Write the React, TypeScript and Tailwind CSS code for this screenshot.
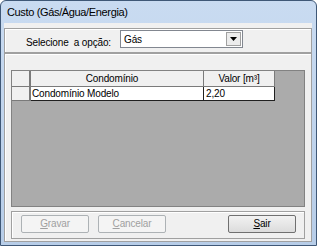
const FONT = "font-['Liberation_Sans','Noto_Sans',sans-serif]";

function ArrowDown() {
  return (
    <svg width="7" height="4" viewBox="0 0 7 4" aria-hidden="true">
      <polygon points="0,0 7,0 3.5,4" fill="#000" />
    </svg>
  );
}

function WinButton({ label, disabled }: { label: string; disabled?: boolean }) {
  const [first, ...rest] = label;
  return (
    <button
      className={
        disabled
          ? "w-[68px] h-[18px] rounded-[2px] border border-[#adb2b5] bg-[#f4f4f4] text-[10px] leading-none text-[#a0a0a0]"
          : "w-[68px] h-[18px] rounded-[2px] border border-[#707070] bg-gradient-to-b from-[#f2f2f2] to-[#dcdcdc] text-[10px] leading-none text-black"
      }
    >
      <span className="underline underline-offset-[1px]">{first}</span>
      {rest.join("")}
    </button>
  );
}

export default function App() {
  return (
    <div className={`w-[317px] h-[246px] bg-white ${FONT}`}>
      <div className="w-full h-full flex flex-col rounded-t-[6px] border border-[#3f5877] bg-gradient-to-b from-[#c9dbf1] to-[#b7cde8] overflow-hidden">
        {/* Title bar */}
        <div className="h-[22px] shrink-0 flex items-center pl-[6px] text-[11px] tracking-[-0.35px] text-black">
          Custo (Gás/Água/Energia)
        </div>

        {/* Client area */}
        <div className="flex-1 ml-[3px] mr-[4px] mb-[3px] bg-[#f0f0f0] flex flex-col text-[10px] tracking-[-0.15px] text-black">
          {/* Selection panel */}
          <div className="mt-[5px] h-[25px] shrink-0 border border-[#a0a0a0] shadow-[inset_1px_1px_0_#ffffff] flex items-start">
            <div className="w-[106px] pt-[6px] text-right">Selecione&nbsp; a opção:</div>
            <div className="ml-[9px] mt-[1px] w-[123px] h-[18px] bg-white border border-[#828790] flex items-center">
              <span className="flex-1 pl-[3px]">Gás</span>
              <span className="w-[15px] h-[14px] mr-[1px] border border-[#a0a0a0] bg-[#ececec] flex items-center justify-center">
                <ArrowDown />
              </span>
            </div>
          </div>

          {/* Main panel */}
          <div className="flex-1 border border-[#a0a0a0] shadow-[inset_1px_1px_0_#ffffff] flex flex-col px-[6px] pt-[16px] pb-[2px]">
            {/* Grid */}
            <div className="h-[137px] bg-[#ababab] border border-[#828282] flex flex-col">
              <div className="flex h-[16px]">
                <div className="w-[19px] bg-[#f0f0f0] border-r-2 border-b border-[#7a7a7a]" />
                <div className="w-[173px] bg-[#f0f0f0] border-r border-b border-[#7a7a7a] flex items-center justify-center pr-[10px]">
                  Condomínio
                </div>
                <div className="w-[71px] bg-[#f0f0f0] border-r border-b border-[#7a7a7a] flex items-center justify-center">
                  Valor [m³]
                </div>
              </div>
              <div className="flex h-[14px]">
                <div className="w-[19px] bg-[#f0f0f0] border-r-2 border-b border-[#7a7a7a]" />
                <div className="w-[173px] bg-white border-r border-b border-[#202020] flex items-center pl-[1px]">
                  Condomínio Modelo
                </div>
                <div className="w-[71px] bg-white border-r border-b border-[#202020] flex items-center pl-[2px]">
                  2,20
                </div>
              </div>
            </div>

            {/* Buttons */}
            <div className="mt-[4px] flex-1 border border-[#a0a0a0] shadow-[inset_1px_1px_0_#ffffff] flex items-start pt-[3px] pl-[9px] pr-[8px]">
              <div className="flex gap-[9px]">
                <WinButton label="Gravar" disabled />
                <WinButton label="Cancelar" disabled />
              </div>
              <div className="flex-1" />
              <WinButton label="Sair" />
            </div>
          </div>
        </div>
      </div>
    </div>
  );
}
